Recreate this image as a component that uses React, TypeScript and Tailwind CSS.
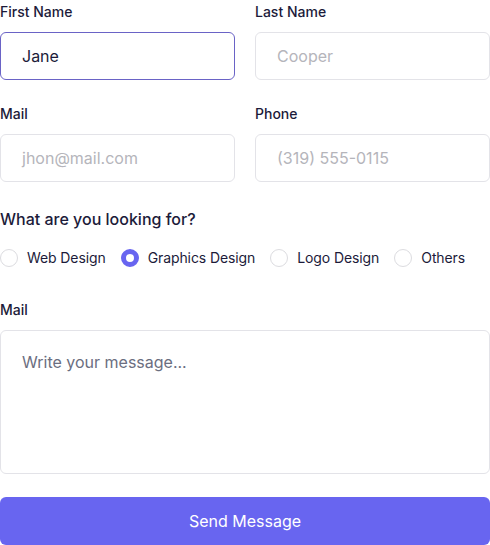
import React from "react";

function Radio({ label, checked }: { label: string; checked?: boolean }) {
  return (
    <label className="flex items-center gap-[9px]">
      {checked ? (
        <span className="w-[18px] h-[18px] rounded-full border-[5px] border-[#6865f0] bg-white" />
      ) : (
        <span className="w-[18px] h-[18px] rounded-full border border-[#dcdce0] bg-white" />
      )}
      <span className="text-[14px] leading-[20px] tracking-[-0.1px] text-[#1c1b3a]">{label}</span>
    </label>
  );
}

export default function App() {
  return (
    <div className="w-[490px] h-[545px] bg-white" style={{ fontFamily: "Inter, 'Noto Sans', sans-serif" }}>
      <div className="grid grid-cols-2 gap-x-[20px]">
        <div>
          <div className="text-[14px] leading-[24px] font-medium text-[#1c1b3a] mb-[8px]">First Name</div>
          <div className="h-[48px] rounded-[6px] border border-[#6a63c6] flex items-center px-[21px] text-[16px] text-[#1c1b3a]">Jane</div>
        </div>
        <div>
          <div className="text-[14px] leading-[24px] font-medium text-[#1c1b3a] mb-[8px]">Last Name</div>
          <div className="h-[48px] rounded-[6px] border border-[#e3e3e8] flex items-center px-[21px] text-[16px] text-[#b5b5bb]">Cooper</div>
        </div>
        <div className="mt-[22px]">
          <div className="text-[14px] leading-[24px] font-medium text-[#1c1b3a] mb-[8px]">Mail</div>
          <div className="h-[48px] rounded-[6px] border border-[#e3e3e8] flex items-center px-[21px] text-[16px] text-[#b5b5bb]">jhon@mail.com</div>
        </div>
        <div className="mt-[22px]">
          <div className="text-[14px] leading-[24px] font-medium text-[#1c1b3a] mb-[8px]">Phone</div>
          <div className="h-[48px] rounded-[6px] border border-[#e3e3e8] flex items-center px-[21px] text-[16px] text-[#b5b5bb]">(319) 555-0115</div>
        </div>
      </div>
      <div className="mt-[24px] text-[16px] leading-[26px] font-medium text-[#1c1b3a]">What are you looking for?</div>
      <div className="mt-[16px] flex items-center gap-[15px]">
        <Radio label="Web Design" />
        <Radio label="Graphics Design" checked />
        <Radio label="Logo Design" />
        <Radio label="Others" />
      </div>
      <div className="mt-[30px] text-[14px] leading-[24px] font-medium text-[#1c1b3a] mb-[8px]">Mail</div>
      <div className="h-[144px] rounded-[6px] border border-[#e3e3e8] px-[21px] pt-[19px] text-[16px] leading-[24px] text-[#6b6e80]">Write your message...</div>
      <div className="mt-[23px] h-[48px] rounded-[6px] bg-[#6865f0] flex items-center justify-center text-[16px] text-white">Send Message</div>
    </div>
  );
}
